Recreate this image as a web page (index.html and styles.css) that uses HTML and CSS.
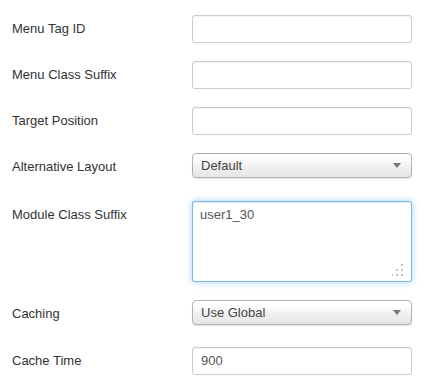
FILE: index.html
```html
<!DOCTYPE html>
<html>
<head>
<meta charset="utf-8">
<link rel="stylesheet" href="styles.css">
</head>
<body>
<div class="form">
  <div class="row">
    <label class="lbl">Menu Tag ID</label>
    <div class="input"></div>
  </div>
  <div class="row">
    <label class="lbl">Menu Class Suffix</label>
    <div class="input"></div>
  </div>
  <div class="row">
    <label class="lbl">Target Position</label>
    <div class="input"></div>
  </div>
  <div class="row row-select">
    <label class="lbl">Alternative Layout</label>
    <div class="select"><span>Default</span>
      <svg class="caret" width="8" height="5" viewBox="0 0 8 5"><path d="M0 0H8L4 5Z" fill="#777"/></svg>
    </div>
  </div>
  <div class="row">
    <label class="lbl">Module Class Suffix</label>
    <div class="textarea"><span>user1_30</span>
      <svg class="grip" width="12" height="12" viewBox="0 0 12 12">
        <rect x="9" y="0" width="2" height="2" fill="#c4c4c4"/>
        <rect x="4" y="5" width="2" height="2" fill="#c4c4c4"/>
        <rect x="9" y="5" width="2" height="2" fill="#c4c4c4"/>
        <rect x="-1" y="10" width="2" height="2" fill="#c4c4c4"/>
        <rect x="4" y="10" width="2" height="2" fill="#c4c4c4"/>
        <rect x="9" y="10" width="2" height="2" fill="#c4c4c4"/>
      </svg>
    </div>
  </div>
  <div class="row row-select">
    <label class="lbl">Caching</label>
    <div class="select"><span>Use Global</span>
      <svg class="caret" width="8" height="5" viewBox="0 0 8 5"><path d="M0 0H8L4 5Z" fill="#777"/></svg>
    </div>
  </div>
  <div class="row">
    <label class="lbl">Cache Time</label>
    <div class="input"><span>900</span></div>
  </div>
</div>
</body>
</html>
```
FILE: styles.css
```css
html, body {
  margin: 0;
  padding: 0;
  background: #fff;
}
body {
  font-family: "Liberation Sans", Arial, sans-serif;
  font-size: 13px;
  color: #333;
}
.form {
  padding: 15px 0 0 12px;
}
.row {
  display: flex;
  align-items: flex-start;
  margin-bottom: 18px;
}
.row-select {
  margin-bottom: 23px;
}
.row-select:nth-child(6) {
  margin-bottom: 22px;
}
.lbl {
  width: 180px;
  flex: none;
  padding-top: 5px;
  line-height: 18px;
  color: #333;
}
.input {
  box-sizing: border-box;
  width: 220px;
  height: 28px;
  border: 1px solid #ccc;
  border-radius: 3px;
  background: #fff;
  box-shadow: inset 0 1px 1px rgba(0,0,0,0.06);
  padding: 4px 8px;
  line-height: 18px;
  color: #555;
}
.select {
  box-sizing: border-box;
  width: 220px;
  height: 25px;
  border: 1px solid #b3b3b3;
  border-radius: 4px;
  background: linear-gradient(#ffffff 20%, #f0f0f0 55%, #e6e6e6);
  box-shadow: 0 1px 1px rgba(0,0,0,0.1);
  padding: 0 8px;
  display: flex;
  align-items: center;
  justify-content: space-between;
  line-height: 18px;
  color: #444;
}
.caret {
  display: block;
  margin-right: 2px;
}
.textarea {
  position: relative;
  box-sizing: border-box;
  width: 220px;
  height: 81px;
  border: 1px solid rgba(82,168,236,0.8);
  border-radius: 3px;
  background: #fff;
  box-shadow: inset 0 1px 1px rgba(0,0,0,0.075), 0 0 6px rgba(82,168,236,0.55);
  padding: 4px 7px;
  line-height: 18px;
  color: #555;
}
.grip {
  position: absolute;
  right: 7px;
  bottom: 5px;
}
```
